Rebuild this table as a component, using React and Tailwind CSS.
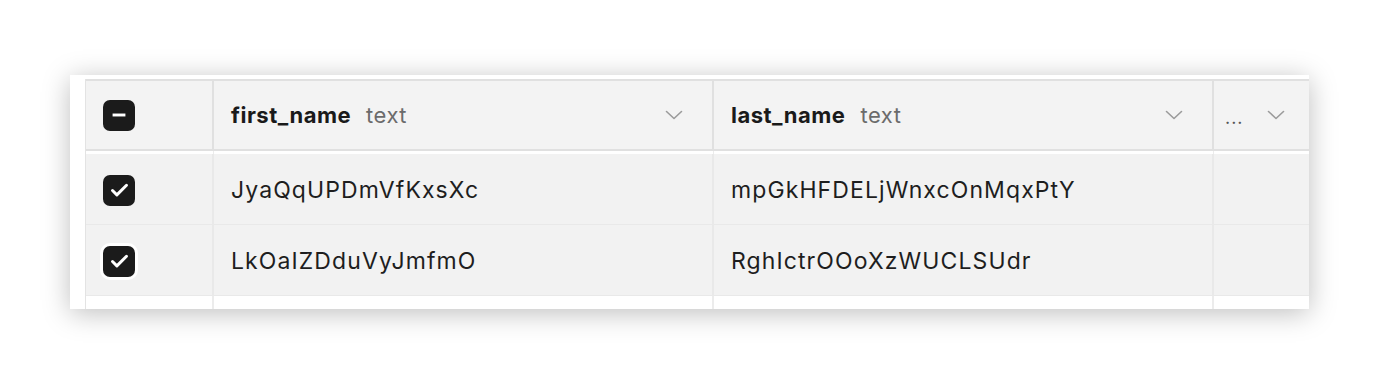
import { Check, Minus } from "lucide-react";

const rows = [
  { first: "JyaQqUPDmVfKxsXc", last: "mpGkHFDELjWnxcOnMqxPtY", ring: false },
  { first: "LkOaIZDduVyJmfmO", last: "RghIctrOOoXzWUCLSUdr", ring: true },
];

function Chevron() {
  return (
    <svg width="18" height="10" viewBox="0 0 18 10" fill="none">
      <path d="M1.5 1.5 L9 8.5 L16.5 1.5" stroke="#9b9b9b" strokeWidth="1.6" strokeLinecap="round" strokeLinejoin="round" />
    </svg>
  );
}

function Box({ children, ring }) {
  return (
    <div
      className={
        "w-[32px] h-[31px] rounded-[7px] bg-[#1b1b1b] flex items-center justify-center " +
        (ring ? "ring-[3px] ring-white" : "")
      }
    >
      {children}
    </div>
  );
}

function HeaderCell({ name, type }) {
  return (
    <div className="w-[500px] shrink-0 border-r-2 border-[#e0e0e0] flex items-center pl-[17px] pr-[29px]">
      <span className="font-bold text-[22px] text-[#1a1a1a] tracking-[0.5px]">{name}</span>
      <span className="ml-[15px] text-[22px] text-[#6b6b6b] tracking-[0.5px]">{type}</span>
      <span className="ml-auto flex">
        <Chevron />
      </span>
    </div>
  );
}

export default function App() {
  return (
    <div className="w-[1380px] h-[384px] bg-white pt-[75px] pl-[70px] font-['Inter',sans-serif]">
      <div className="w-[1239px] h-[234px] bg-white shadow-[0_4px_26px_rgba(0,0,0,0.26)] pl-[15px] pt-[4px] overflow-hidden">
        <div className="border-l border-[#e3e3e3] h-full flex flex-col">
          {/* header */}
          <div className="h-[72px] flex bg-[#f3f3f3] border-y-2 border-[#e0e0e0]">
            <div className="w-[128px] shrink-0 border-r-2 border-[#e0e0e0] flex items-center pl-[17px]">
              <Box>
                <Minus size={22} strokeWidth={3.2} color="white" strokeLinecap="butt" />
              </Box>
            </div>
            <HeaderCell name="first_name" type="text" />
            <HeaderCell name="last_name" type="text" />
            <div className="flex-1 flex items-center pl-[11px] pr-[24px]">
              <span className="text-[18px] text-[#555] tracking-[1px] mt-[4px]">...</span>
              <span className="ml-auto flex">
                <Chevron />
              </span>
            </div>
          </div>

          <div className="h-[3px] flex">
            <div className="w-[128px] border-r border-[#ececec]" />
            <div className="w-[500px] border-r border-[#ececec]" />
            <div className="w-[500px] border-r border-[#ececec]" />
          </div>

          {rows.map((r, i) => (
            <div key={i} className="h-[71px] flex bg-[#f2f2f2] border-b border-[#e9e9e9]">
              <div className="w-[128px] shrink-0 border-r-2 border-[#e9e9e9] flex items-center pl-[17px] pt-[3px]">
                <Box ring={r.ring}>
                  <Check size={21} strokeWidth={3.4} color="white" />
                </Box>
              </div>
              <div className="w-[500px] shrink-0 border-r-2 border-[#e9e9e9] flex items-center pl-[17px] pt-[2px] text-[23px] tracking-[1.1px] text-[#1e1e1e]">
                {r.first}
              </div>
              <div className="w-[500px] shrink-0 border-r-2 border-[#e9e9e9] flex items-center pl-[17px] pt-[2px] text-[23px] tracking-[1.1px] text-[#1e1e1e]">
                {r.last}
              </div>
              <div className="flex-1" />
            </div>
          ))}

          <div className="flex-1 flex bg-white">
            <div className="w-[128px] border-r-2 border-[#ececec]" />
            <div className="w-[500px] border-r-2 border-[#ececec]" />
            <div className="w-[500px] border-r-2 border-[#ececec]" />
          </div>
        </div>
      </div>
    </div>
  );
}
